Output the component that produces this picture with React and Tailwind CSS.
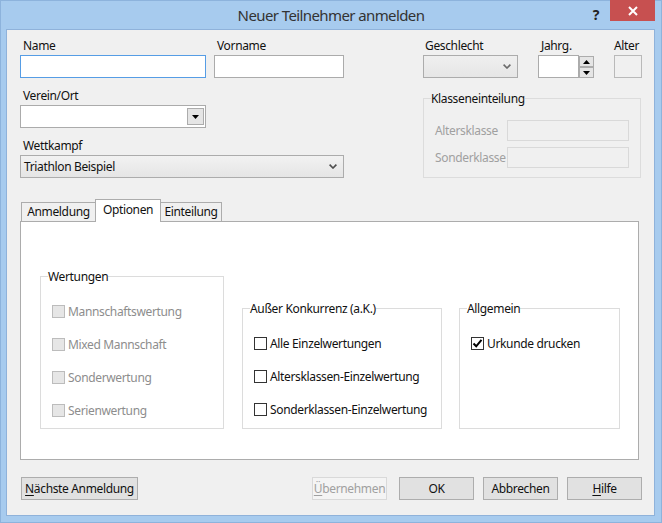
import React from 'react';

const Label = ({ children, className = '' }) => (
  <div className={`h-[15px] leading-[15px] text-[12px] text-[#111] whitespace-nowrap ${className}`}>{children}</div>
);

const Chevron = ({ color = '#4d4d4d' }) => (
  <svg width="8" height="5" viewBox="0 0 8 5">
    <path d="M0.6 0.6 L4 4 L7.4 0.6" fill="none" stroke={color} strokeWidth="1.6" />
  </svg>
);

const Checkbox = ({ label, checked, disabled }) => (
  <div className="h-[33px] flex items-center">
    <div
      className={`w-[13px] h-[13px] shrink-0 border flex items-center justify-center ${
        disabled ? 'bg-[#e6e6e6] border-[#bcbcbc]' : 'bg-white border-[#333333]'
      }`}
    >
      {checked && (
        <svg width="11" height="11" viewBox="0 0 11 11">
          <path d="M1.5 5.5 L4.2 8.3 L9.5 1.8" fill="none" stroke="#000" strokeWidth="2" />
        </svg>
      )}
    </div>
    <span className={`ml-[3px] text-[12px] whitespace-nowrap ${disabled ? 'text-[#8d8d8d]' : 'text-[#111]'}`}>
      {label}
    </span>
  </div>
);

const Group = ({ title, className = '', children }) => (
  <fieldset className={`min-w-0 shrink-0 border border-[#dcdcdc] px-[11px] ${className}`}>
    <legend className="ml-[-4px] px-0 text-[12px] leading-[15px] text-[#111] whitespace-nowrap">{title}</legend>
    {children}
  </fieldset>
);

const Button = ({ children, disabled, className = '' }) => (
  <div
    className={`h-[23px] flex items-center justify-center text-[12px] border ${
      disabled ? 'bg-[#f4f4f4] border-[#d9d9d9] text-[#a0a0a0]' : 'bg-[#e1e1e1] border-[#adadad] text-[#111]'
    } ${className}`}
  >
    {children}
  </div>
);

const Tab = ({ children, selected, className = '' }) => (
  <div
    className={`border border-b-0 border-[#acacac] flex items-center justify-center text-[12px] text-[#111] ${
      selected ? 'h-[23px] bg-white relative z-10 mb-[-1px] pb-[3px]' : 'h-[19px] bg-[#f0f0f0]'
    } ${className}`}
  >
    {children}
  </div>
);

export default function App() {
  return (
    <div className="w-[662px] h-[523px] bg-[#a7cbee] border border-[#8db3dc] flex flex-col font-['Noto_Sans',sans-serif] tracking-[-0.35px]">
      {/* title bar */}
      <div className="h-[28px] relative flex items-center justify-center">
        <span className="text-[15px] tracking-[-0.6px] text-[#333] mt-[1px]">Neuer Teilnehmer anmelden</span>
        <span className="absolute right-[62px] top-[3px] text-[14px] font-bold text-[#222]">?</span>
        <div className="absolute right-[6px] top-[-1px] w-[45px] h-[21px] bg-[#c75050] flex items-center justify-center">
          <svg width="10" height="10" viewBox="0 0 10 10">
            <path d="M1 1 L9 9 M9 1 L1 9" stroke="#fff" strokeWidth="2" />
          </svg>
        </div>
      </div>

      {/* client area */}
      <div className="ml-[5px] mr-[6px] mb-[6px] flex-1 border border-[#8fb2da] bg-[#f0f0f0] flex flex-col">
        <div className="flex pl-[13px] pt-[8px]">
          {/* left block */}
          <div className="w-[324px] shrink-0 flex flex-col">
            <div className="flex">
              <div className="w-[186px]">
                <Label className="pl-[3px]">Name</Label>
                <div className="mt-[2px] h-[23px] bg-white border border-[#569de5]" />
              </div>
              <div className="w-[130px] ml-[8px]">
                <Label className="pl-[3px]">Vorname</Label>
                <div className="mt-[2px] h-[23px] bg-white border border-[#ababab]" />
              </div>
            </div>
            <div className="w-[186px] mt-[10px]">
              <Label className="pl-[3px]">Verein/Ort</Label>
              <div className="mt-[2px] h-[23px] bg-white border border-[#ababab] flex items-center justify-end pr-[1px]">
                <div className="w-[17px] h-[17px] bg-[#e5e5e5] border border-[#acacac] flex items-center justify-center">
                  <svg width="7" height="4" viewBox="0 0 7 4">
                    <path d="M0 0 L7 0 L3.5 4 Z" fill="#000" />
                  </svg>
                </div>
              </div>
            </div>
            <div className="w-[324px] mt-[10px]">
              <Label className="pl-[3px]">Wettkampf</Label>
              <div className="mt-[2px] h-[23px] bg-gradient-to-b from-[#f2f2f2] to-[#e5e5e5] border border-[#acacac] flex items-center justify-between pl-[3px] pr-[6px]">
                <span className="text-[12px] text-[#111]">Triathlon Beispiel</span>
                <Chevron />
              </div>
            </div>
          </div>

          {/* right block */}
          <div className="w-[218px] shrink-0 ml-[79px] flex flex-col">
            <div className="flex">
              <div className="w-[95px] shrink-0">
                <Label className="pl-[2px]">Geschlecht</Label>
                <div className="mt-[2px] h-[23px] bg-gradient-to-b from-[#efefef] to-[#e6e6e6] border border-[#acacac] flex items-center justify-end pr-[6px]">
                  <Chevron color="#6a6a6a" />
                </div>
              </div>
              <div className="ml-[20px] shrink-0">
                <Label className="pl-[3px]">Jahrg.</Label>
                <div className="mt-[2px] flex">
                  <div className="w-[41px] h-[23px] bg-white border border-[#ababab]" />
                  <div className="w-[15px] h-[23px] flex flex-col justify-between pt-[1px]">
                    <div className="h-[11px] bg-[#e5e5e5] border border-[#acacac] flex items-center justify-center">
                      <svg width="7" height="4" viewBox="0 0 7 4"><path d="M0 4 L7 4 L3.5 0 Z" fill="#000" /></svg>
                    </div>
                    <div className="h-[11px] bg-[#e5e5e5] border border-[#acacac] flex items-center justify-center">
                      <svg width="7" height="4" viewBox="0 0 7 4"><path d="M0 0 L7 0 L3.5 4 Z" fill="#000" /></svg>
                    </div>
                  </div>
                </div>
              </div>
              <div className="ml-[20px] shrink-0">
                <Label>Alter</Label>
                <div className="mt-[2px] w-[28px] h-[23px] bg-[#f0f0f0] border border-[#b9b9b9]" />
              </div>
            </div>
            <Group title="Klasseneinteilung" className="w-[218px] mt-[13px] h-[87px] pt-[14px]">
              <div className="flex items-center">
                <span className="text-[12px] text-[#a0a0a0]">Altersklasse</span>
                <div className="ml-auto w-[122px] h-[21px] border border-[#d9d9d9] bg-[#f0f0f0]" />
              </div>
              <div className="flex items-center mt-[6px]">
                <span className="text-[12px] text-[#a0a0a0]">Sonderklasse</span>
                <div className="ml-auto w-[122px] h-[21px] border border-[#d9d9d9] bg-[#f0f0f0]" />
              </div>
            </Group>
          </div>
        </div>

        {/* tabs */}
        <div className="mt-[21px] ml-[14px] flex items-end">
          <Tab className="w-[75px]">Anmeldung</Tab>
          <Tab selected className="w-[66px] ml-[-1px]">Optionen</Tab>
          <Tab className="w-[62px] ml-[-1px]">Einteilung</Tab>
        </div>
        <div className="ml-[13px] mr-[15px] h-[239px] bg-white border border-[#acacac] flex items-end pl-[19px] pb-[30px]">
          <Group title="Wertungen" className="w-[184px] h-[160px] pt-[11px]">
            <Checkbox label="Mannschaftswertung" disabled />
            <Checkbox label="Mixed Mannschaft" disabled />
            <Checkbox label="Sonderwertung" disabled />
            <Checkbox label="Serienwertung" disabled />
          </Group>
          <Group title="Außer Konkurrenz (a.K.)" className="ml-[18px] w-[200px] h-[128px] pt-[11px]">
            <Checkbox label="Alle Einzelwertungen" />
            <Checkbox label="Altersklassen-Einzelwertung" />
            <Checkbox label="Sonderklassen-Einzelwertung" />
          </Group>
          <Group title="Allgemein" className="ml-[17px] w-[161px] h-[128px] pt-[11px]">
            <Checkbox label="Urkunde drucken" checked />
          </Group>
        </div>

        {/* buttons */}
        <div className="mt-[17px] flex pl-[14px] pr-[12px]">
          <Button className="w-[117px]">
            <span className="underline underline-offset-[2px]">N</span>ächste Anmeldung
          </Button>
          <div className="flex-1" />
          <Button disabled className="w-[75px]">
            <span className="underline underline-offset-[2px]">Ü</span>bernehmen
          </Button>
          <Button className="w-[75px] ml-[12px]">OK</Button>
          <Button className="w-[75px] ml-[9px]">Abbrechen</Button>
          <Button className="w-[75px] ml-[9px]">
            <span className="underline underline-offset-[2px]">H</span>ilfe
          </Button>
        </div>
      </div>
    </div>
  );
}
